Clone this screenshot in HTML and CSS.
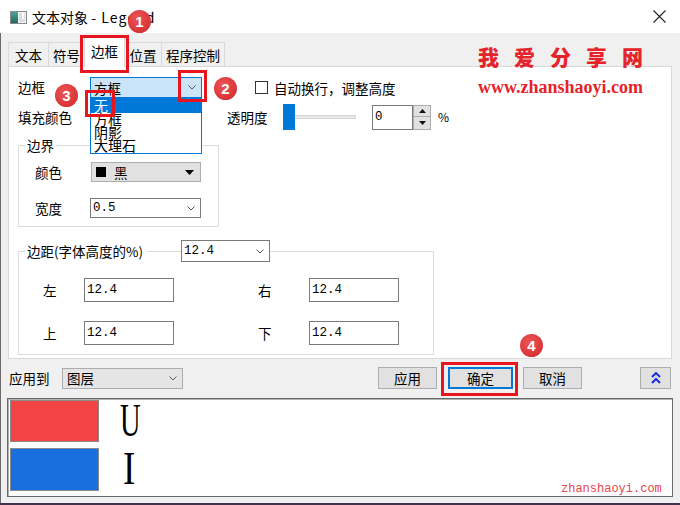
FILE: index.html
```html
<!DOCTYPE html>
<html lang="zh-CN">
<head>
<meta charset="utf-8">
<title>文本对象 - Legend</title>
<link rel="stylesheet" href="styles.css">
</head>
<body>
<div class="window">
  <div class="titlebar">
    <svg class="appicon" width="17" height="13" viewBox="0 0 17 13">
      <defs>
        <linearGradient id="g1" x1="0" y1="0" x2="0" y2="1">
          <stop offset="0" stop-color="#4aa39a"/>
          <stop offset="1" stop-color="#1f6b5e"/>
        </linearGradient>
      </defs>
      <rect x="0.5" y="0.5" width="16" height="12" fill="#f4f4f4" stroke="#8a8a8a"/>
      <rect x="1" y="1" width="7" height="11" fill="url(#g1)"/>
      <rect x="9" y="2" width="6" height="9" fill="#dcdcdc"/>
      <rect x="12" y="2" width="2" height="6" fill="#ffffff"/>
    </svg>
    <span class="title">文本对象 <span class="latin">- Legend</span></span>
    <svg class="close" width="13" height="13" viewBox="0 0 13 13">
      <path d="M0.5 0.5 L12.5 12.5 M12.5 0.5 L0.5 12.5" stroke="#222" stroke-width="1.1"/>
    </svg>
  </div>

  <div class="tabs">
    <div class="tab t1">文本</div>
    <div class="tab t2">符号</div>
    <div class="tab t3 active">边框</div>
    <div class="tab t4">位置</div>
    <div class="tab t5">程序控制</div>
  </div>

  <div class="panel">
    <div class="row r1">
      <span class="lbl w72">边框</span>
      <div class="combo combo-sel">
        <span>方框</span>
        <svg class="chev" width="8" height="5" viewBox="0 0 8 5"><polyline points="0.5,0.5 4,4 7.5,0.5" fill="none" stroke="#555"/></svg>
      </div>
      <span class="check"></span>
      <span class="checklbl">自动换行，调整高度</span>
    </div>

    <div class="row r2">
      <span class="lbl w209">填充颜色</span>
      <span class="lbl w56">透明度</span>
      <div class="slider"><span class="thumb"></span><span class="track"></span></div>
      <div class="input num w41">0</div>
      <div class="spin">
        <span class="spinbtn"><svg width="7" height="4" viewBox="0 0 7 4"><polygon points="0,4 3.5,0 7,4" fill="#111"/></svg></span>
        <span class="spinbtn"><svg width="7" height="4" viewBox="0 0 7 4"><polygon points="0,0 3.5,4 7,0" fill="#111"/></svg></span>
      </div>
      <span class="pct">%</span>
    </div>

    <fieldset class="grp g1">
      <legend class="legend1">边界</legend>
      <div class="gbody1">
        <div class="row grow">
          <span class="lbl w56">颜色</span>
          <div class="combo combo-gray w110">
            <span class="swatch"></span>
            <span class="cname">黑</span>
            <svg class="tri" width="9" height="5" viewBox="0 0 9 5"><polygon points="0,0 9,0 4.5,5" fill="#000"/></svg>
          </div>
        </div>
        <div class="row grow gap16">
          <span class="lbl w55">宽度</span>
          <div class="combo combo-white w111">
            <span class="num">0.5</span>
            <svg class="chev" width="8" height="5" viewBox="0 0 8 5"><polyline points="0.5,0.5 4,4 7.5,0.5" fill="none" stroke="#555"/></svg>
          </div>
        </div>
      </div>
    </fieldset>

    <fieldset class="grp g2">
      <legend class="legend2">
        <span class="ltext">边距(字体高度的%)</span>
        <span class="lline"></span>
        <span class="combo combo-white w89">
          <span class="num">12.4</span>
          <svg class="chev" width="8" height="5" viewBox="0 0 8 5"><polyline points="0.5,0.5 4,4 7.5,0.5" fill="none" stroke="#555"/></svg>
        </span>
      </legend>
      <div class="gbody2">
        <div class="row mrow">
          <span class="lbl w41">左</span>
          <div class="input num w90">12.4</div>
          <span class="lbl w51 ml84">右</span>
          <div class="input num w90">12.4</div>
        </div>
        <div class="row mrow mt19">
          <span class="lbl w41">上</span>
          <div class="input num w90">12.4</div>
          <span class="lbl w51 ml84">下</span>
          <div class="input num w90">12.4</div>
        </div>
      </div>
    </fieldset>
  </div>

  <div class="actions">
    <span class="lbl w53">应用到</span>
    <div class="combo combo-gray2 w121">
      <span>图层</span>
      <svg class="chev" width="8" height="5" viewBox="0 0 8 5"><polyline points="0.5,0.5 4,4 7.5,0.5" fill="none" stroke="#555"/></svg>
    </div>
    <div class="btn b-apply">应用</div>
    <div class="btn b-ok">确定</div>
    <div class="btn b-cancel">取消</div>
    <div class="btn b-expand">
      <svg width="10" height="12" viewBox="0 0 10 12"><polyline points="1,5 5,1 9,5" fill="none" stroke="#1a2ee8" stroke-width="2"/><polyline points="1,11 5,7 9,11" fill="none" stroke="#1a2ee8" stroke-width="2"/></svg>
    </div>
  </div>

  <div class="preview">
    <div class="prow">
      <span class="pswatch red"></span>
      <span class="pletter">U</span>
    </div>
    <div class="prow prow2">
      <span class="pswatch blue"></span>
      <span class="pletter pl-i">I</span>
    </div>
    <span class="wm-small">zhanshaoyi.com</span>
  </div>

  <!-- overlays -->
  <div class="droplist">
    <div class="ditem hl">无</div>
    <div class="ditem">方框</div>
    <div class="ditem">阴影</div>
    <div class="ditem">大理石</div>
  </div>

  <div class="wm-big">我爱分享网</div>
  <div class="wm-url">www.zhanshaoyi.com</div>

  <div class="redbox rb-tab"></div>
  <div class="redbox rb-arrow"></div>
  <div class="redbox rb-none"></div>
  <div class="redbox rb-ok"></div>

  <div class="badge bd1">1</div>
  <div class="badge bd2">2</div>
  <div class="badge bd3">3</div>
  <div class="badge bd4">4</div>
</div>
</body>
</html>
```

FILE: styles.css
```css
* { box-sizing: border-box; }

html, body {
  margin: 0;
  padding: 0;
}

body {
  width: 680px;
  height: 505px;
  overflow: hidden;
  background: #43334a;
  font-family: "Noto Sans CJK SC", "Noto Sans", sans-serif;
  font-size: 13.5px;
  color: #000;
}

.window {
  position: relative;
  width: 680px;
  height: 503px;
  background: #f0f0f0;
  box-shadow: inset 1px 0 0 #6a6a6a;
}

/* title bar */
.titlebar {
  height: 33px;
  background: #fff;
  display: flex;
  align-items: center;
  padding-left: 10px;
}
.appicon { margin-right: 5px; margin-top: 1px; }
.title { font-size: 14px; line-height: 16px; white-space: pre; }
.latin { letter-spacing: 1.1px; }
.close { margin-left: auto; margin-right: 14px; }

/* tabs */
.tabs {
  height: 33px;
  display: flex;
  align-items: flex-end;
  padding-left: 8px;
}
.tab {
  height: 24px;
  border: 1px solid #d9d9d9;
  border-bottom: none;
  background: #f0f0f0;
  display: flex;
  align-items: center;
  justify-content: center;
  margin-right: -1px;
  line-height: 16px;
}
.t1 { width: 41px; }
.t2 { width: 37px; }
.t3 { width: 41px; }
.t4 { width: 38px; }
.t5 { width: 64px; }
.tab.active {
  height: 30px;
  background: #fff;
  position: relative;
  z-index: 2;
  margin-bottom: -1px;
  padding-bottom: 4px;
}

/* panel */
.panel {
  margin: 0 8px;
  height: 293px;
  border: 1px solid #d9d9d9;
  background: #fff;
  padding: 10px 0 0 9px;
}

.row { display: flex; align-items: center; }
.lbl { flex: none; line-height: 16px; }
.w41 { width: 41px; }
.w51 { width: 51px; }
.w53 { width: 53px; }
.w55 { width: 55px; }
.w56 { width: 56px; }
.w72 { width: 72px; }
.w209 { width: 209px; }
.ml84 { margin-left: 84px; }
.mt19 { margin-top: 19px; }
.gap16 { margin-top: 16px; }

.r1 { height: 21px; }
.r1 > .lbl { margin-top: -2px; }
.combo {
  flex: none;
  display: flex;
  align-items: center;
  border: 1px solid #a0a0a0;
  padding-left: 3px;
  line-height: 16px;
}
.chev { margin-left: auto; margin-right: 5px; flex: none; }
.combo-sel {
  width: 112px;
  height: 21px;
  background: #cce4f7;
  border-color: #0078d7;
}
.check {
  flex: none;
  width: 13px;
  height: 13px;
  border: 1px solid #333;
  background: #fff;
  margin-left: 53px;
}
.checklbl { margin-left: 6px; line-height: 16px; }

.r2 { height: 26px; margin-top: 6px; }
.slider {
  flex: none;
  width: 73px;
  height: 26px;
  display: flex;
  align-items: center;
}
.thumb {
  width: 12px;
  height: 26px;
  background: #0078d7;
}
.track {
  flex: 1;
  height: 4px;
  background: #e7eaea;
  border: 1px solid #d6d6d6;
  border-left: none;
}
.input {
  flex: none;
  height: 24px;
  border: 1px solid #7a7a7a;
  background: #fff;
  display: flex;
  align-items: center;
  padding-left: 2px;
}
.r2 .input { margin-left: 16px; height: 25px; }
.w90 { width: 90px; }
.num {
  font-family: "Liberation Mono", "DejaVu Sans Mono", monospace;
  font-size: 12.5px;
  line-height: 16px;
}
.spin {
  flex: none;
  width: 18px;
  height: 25px;
  display: flex;
  flex-direction: column;
}
.spinbtn {
  height: 12.5px;
  background: #e1e1e1;
  border: 1px solid #adadad;
  display: flex;
  align-items: center;
  justify-content: center;
}
.spinbtn + .spinbtn { border-top: none; }
.pct { margin-left: 7px; font-size: 12px; line-height: 16px; }

/* group boxes */
.grp {
  margin: 0;
  padding: 0;
  min-inline-size: 0;
  border: 1px solid #dcdcdc;
}
.g1 { width: 201px; margin-top: 6px; }
.legend1 {
  margin-left: 6px;
  padding: 0 2px;
  line-height: 18px;
}
.gbody1 { padding: 8px 0 8px 16px; }
.grow { height: 20px; }
.combo-gray {
  height: 20px;
  background: #e1e1e1;
  border-color: #adadad;
  padding-left: 4px;
}
.w110 { width: 110px; }
.w111 { width: 111px; }
.swatch {
  width: 10px;
  height: 10px;
  background: #000;
  flex: none;
}
.cname { margin-left: 8px; }
.tri { margin-left: auto; margin-right: 6px; }
.combo-white {
  height: 21px;
  background: #fff;
  border-color: #7a7a7a;
  padding-left: 2px;
}
.grow .combo-white { height: 20px; }

.g2 { width: 416px; margin-top: 13px; }
.legend2 {
  margin-left: 6px;
  padding: 0;
  display: flex;
  align-items: center;
  height: 22px;
}
.ltext {
  width: 122px;
  padding-left: 2px;
  line-height: 18px;
  white-space: nowrap;
}
.lline {
  width: 34px;
  height: 1px;
  background: #dcdcdc;
}
.w89 { width: 89px; height: 22px; }
.gbody2 { padding: 16px 0 9px 24px; }
.mrow { height: 24px; }

/* actions */
.actions {
  margin-top: 8px;
  height: 22px;
  display: flex;
  align-items: center;
  padding-left: 9px;
}
.combo-gray2 {
  height: 21px;
  background: #e5e5e5;
  border-color: #adadad;
  padding-left: 4px;
}
.w121 { width: 121px; }
.btn {
  flex: none;
  height: 22px;
  background: #e1e1e1;
  border: 1px solid #adadad;
  display: flex;
  align-items: center;
  justify-content: center;
  line-height: 16px;
}
.b-apply { width: 59px; margin-left: 195px; }
.b-ok { width: 65px; margin-left: 11px; border-color: #0078d7; box-shadow: inset 0 0 0 1px #0078d7; }
.b-cancel { width: 59px; margin-left: 10px; }
.b-expand { width: 31px; margin-left: 58px; }

/* preview */
.preview {
  position: relative;
  margin: 9px 7px 0 7px;
  height: 99px;
  border: 1px solid #6a6a6a;
  box-shadow: inset 1px 1px 0 #b0b0b0;
  background: #fff;
  padding: 1px 0 0 2px;
}
.prow {
  display: flex;
  height: 42px;
}
.prow2 { margin-top: 6px; height: 43px; }
.pswatch {
  width: 89px;
  height: 100%;
  border: 1px solid #8a8a8a;
}
.red { background: #f24444; }
.blue { background: #1a6fdf; }
.pletter {
  margin-left: 21px;
  font-family: "Liberation Serif", "Times New Roman", serif;
  font-size: 46px;
  line-height: 42px;
  transform: scaleX(0.62);
  transform-origin: left center;
}
.pl-i { margin-left: 24px; transform: scaleX(0.8); }
.wm-small {
  position: absolute;
  left: 553px;
  top: 84px;
  font-family: "Liberation Mono", monospace;
  font-size: 12px;
  line-height: 12px;
  color: #e8454d;
}

/* overlays */
.droplist {
  position: absolute;
  left: 90px;
  top: 97px;
  width: 112px;
  height: 57px;
  border: 1px solid #0078d7;
  background: #fff;
  z-index: 5;
  font-size: 14px;
}
.ditem {
  height: 13px;
  line-height: 13px;
  padding-left: 3px;
}
.ditem.hl {
  height: 15px;
  line-height: 15px;
  background: #0078d7;
  color: #fff;
}

.wm-big {
  position: absolute;
  left: 478px;
  top: 45px;
  font-size: 21px;
  line-height: 22px;
  font-weight: 900;
  letter-spacing: 15px;
  color: #e5232a;
  z-index: 6;
}
.wm-url {
  position: absolute;
  left: 478px;
  top: 78px;
  font-family: "Liberation Serif", "Times New Roman", serif;
  font-weight: bold;
  font-size: 18px;
  line-height: 18px;
  color: #e5232a;
  z-index: 6;
}

.redbox {
  position: absolute;
  border: 3px solid #e8151f;
  z-index: 8;
}
.rb-tab { left: 80px; top: 35px; width: 49px; height: 38px; }
.rb-arrow { left: 178px; top: 70px; width: 29px; height: 32px; }
.rb-none { left: 85px; top: 90px; width: 30px; height: 27px; }
.rb-ok { left: 441px; top: 362px; width: 77px; height: 34px; }

.badge {
  position: absolute;
  width: 23px;
  height: 23px;
  border-radius: 50%;
  background: radial-gradient(circle at 40% 35%, #ec5456 0%, #d83437 70%, #c42a2d 100%);
  color: #fff;
  font-family: "Liberation Sans", Arial, sans-serif;
  font-weight: bold;
  font-size: 15px;
  line-height: 23px;
  text-align: center;
  z-index: 9;
}
.bd1 { left: 128px; top: 10px; }
.bd2 { left: 214px; top: 77px; }
.bd3 { left: 55px; top: 84px; }
.bd4 { left: 520px; top: 334px; }
```
